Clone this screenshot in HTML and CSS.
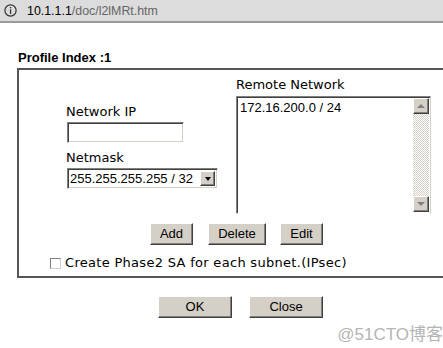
FILE: index.html
```html
<!DOCTYPE html>
<html>
<head>
<meta charset="utf-8">
<link rel="stylesheet" href="styles.css">
</head>
<body>
<div class="addressbar">
  <svg class="info" width="13" height="13" viewBox="0 0 13 13"><circle cx="6.5" cy="6.5" r="5.6" fill="none" stroke="#333" stroke-width="1.2"/><rect x="5.9" y="3" width="1.3" height="1.3" fill="#333"/><rect x="5.9" y="5.3" width="1.3" height="4.6" fill="#333"/></svg>
  <span class="host">10.1.1.1</span><span class="path">/doc/l2lMRt.htm</span>
</div>
<div class="page">
  <div class="title">Profile Index :1</div>
  <div class="group">
    <div class="cols">
      <div class="leftcol">
        <div class="label">Network IP</div>
        <div class="textbox"></div>
        <div class="label label-gap">Netmask</div>
        <div class="select">
          <span class="select-value">255.255.255.255 / 32</span>
          <span class="select-btn"><span class="tri-down"></span></span>
        </div>
      </div>
      <div class="rightcol">
        <div class="label">Remote Network</div>
        <div class="listbox">
          <div class="list-content">172.16.200.0 / 24</div>
          <div class="scrollbar">
            <span class="sb-btn"><span class="tri-up-grey"></span></span>
            <span class="sb-track"></span>
            <span class="sb-btn"><span class="tri-down-grey"></span></span>
          </div>
        </div>
      </div>
    </div>
    <div class="btnrow">
      <button class="btn btn-add">Add</button>
      <button class="btn btn-delete">Delete</button>
      <button class="btn btn-edit">Edit</button>
    </div>
    <div class="checkrow">
      <span class="checkbox"></span>
      <span class="checklabel">Create Phase2 SA for each subnet.(IPsec)</span>
    </div>
  </div>
  <div class="okrow">
    <button class="btn btn-big">OK</button>
    <button class="btn btn-big">Close</button>
  </div>
</div>
<div class="watermark">@51CTO博客</div>
</body>
</html>
```

FILE: styles.css
```css
html, body {
  margin: 0;
  padding: 0;
  background: #ffffff;
  overflow: hidden;
}
body {
  width: 443px;
  height: 348px;
  position: relative;
  font-family: "DejaVu Sans", Verdana, sans-serif;
  font-size: 13px;
  color: #000;
}
.addressbar {
  height: 21px;
  background: #dcdcdc;
  border-bottom: 2px solid #9a9a9a;
  display: flex;
  align-items: center;
  font-family: "Liberation Sans", Arial, sans-serif;
  font-size: 12.4px;
  box-sizing: content-box;
}
.info {
  margin-left: 4px;
  margin-right: 10px;
}
.host { color: #000; }
.path { color: #666; }
.page {
  padding-left: 17px;
}
.title {
  margin-top: 27px;
  margin-left: 1px;
  font-family: "Liberation Sans", Arial, sans-serif;
  font-weight: bold;
  font-size: 13px;
  line-height: 15px;
  height: 15px;
}
.group {
  margin-top: 3px;
  width: 424px;
  border-top: 2px solid #555;
  border-left: 2px solid #555;
  border-bottom: 2px solid #555;
  padding-top: 7px;
  padding-bottom: 6px;
}
.cols {
  display: flex;
  align-items: flex-start;
}
.label {
  line-height: 15px;
  height: 15px;
}
.leftcol {
  margin-left: 47px;
  width: 170px;
  margin-top: 27px;
}
.textbox {
  margin-top: 3px;
  margin-left: 1px;
  width: 117px;
  height: 21px;
  box-sizing: border-box;
  border-top: 1px solid #808080;
  border-left: 1px solid #808080;
  border-bottom: 1px solid #fff;
  border-right: 1px solid #fff;
  box-shadow: inset 1px 1px #404040, inset -1px -1px #d4d0c8;
  background: #fff;
}
.label-gap {
  margin-top: 7px;
}
.select {
  margin-top: 3px;
  margin-left: 1px;
  width: 151px;
  height: 21px;
  box-sizing: border-box;
  border-top: 1px solid #808080;
  border-left: 1px solid #808080;
  border-bottom: 1px solid #fff;
  border-right: 1px solid #fff;
  box-shadow: inset 1px 1px #404040, inset -1px -1px #d4d0c8;
  background: #fff;
  display: flex;
  align-items: center;
  padding: 2px 2px 2px 2px;
  font-family: "Liberation Sans", Arial, sans-serif;
  font-size: 13px;
}
.select-value {
  flex: 1;
  white-space: nowrap;
  line-height: 15px;
}
.select-btn {
  width: 15px;
  height: 15px;
  box-sizing: border-box;
  background: #d4d0c8;
  border-top: 1px solid #fff;
  border-left: 1px solid #fff;
  border-right: 1px solid #404040;
  border-bottom: 1px solid #404040;
  box-shadow: inset -1px -1px #808080;
  display: flex;
  align-items: center;
  justify-content: center;
}
.tri-down {
  width: 0;
  height: 0;
  border-left: 3.5px solid transparent;
  border-right: 3.5px solid transparent;
  border-top: 4px solid #000;
}
.rightcol {
  width: 196px;
}
.listbox {
  margin-top: 4px;
  width: 195px;
  height: 118px;
  box-sizing: border-box;
  border-top: 1px solid #808080;
  border-left: 1px solid #808080;
  border-bottom: 1px solid #fff;
  border-right: 1px solid #d4d0c8;
  box-shadow: inset 1px 1px #404040;
  background: #fff;
  display: flex;
  padding: 1px 1px 1px 1px;
}
.list-content {
  flex: 1;
  font-family: "Liberation Sans", Arial, sans-serif;
  font-size: 13px;
  line-height: 15px;
  padding: 2px 0 0 2px;
}
.scrollbar {
  width: 16px;
  display: flex;
  flex-direction: column;
}
.sb-btn {
  width: 16px;
  height: 16px;
  box-sizing: border-box;
  background: #d4d0c8;
  border-top: 1px solid #fff;
  border-left: 1px solid #fff;
  border-right: 1px solid #404040;
  border-bottom: 1px solid #404040;
  box-shadow: inset -1px -1px #808080;
  display: flex;
  align-items: center;
  justify-content: center;
}
.sb-track {
  flex: 1;
  background: repeating-conic-gradient(#d4d0c8 0 25%, #ffffff 0 50%) 0 0 / 2px 2px;
}
.tri-up-grey {
  width: 0;
  height: 0;
  border-left: 4px solid transparent;
  border-right: 4px solid transparent;
  border-bottom: 4px solid #808080;
}
.tri-down-grey {
  width: 0;
  height: 0;
  border-left: 4px solid transparent;
  border-right: 4px solid transparent;
  border-top: 4px solid #808080;
}
.btnrow {
  margin-top: 9px;
  padding-left: 131px;
  display: flex;
  gap: 14px;
}
.btn {
  font-family: "Liberation Sans", Arial, sans-serif;
  font-size: 13px;
  color: #000;
  background: #d4d0c8;
  height: 22px;
  box-sizing: border-box;
  border-top: 1px solid #fff;
  border-left: 1px solid #fff;
  border-right: 1px solid #404040;
  border-bottom: 1px solid #404040;
  box-shadow: inset -1px -1px #808080;
  padding: 0;
  margin: 0;
  line-height: 18px;
}
.btn-add { width: 43px; }
.btn-delete { width: 58px; margin-left: 1px; }
.btn-edit { width: 43px; }
.checkrow {
  margin-top: 10px;
  padding-left: 31px;
  display: flex;
  align-items: center;
  height: 15px;
  line-height: 15px;
}
.checkbox {
  width: 11px;
  height: 11px;
  box-sizing: border-box;
  border-top: 1px solid #808080;
  border-left: 1px solid #808080;
  border-bottom: 1px solid #d4d0c8;
  border-right: 1px solid #d4d0c8;
  background: #fff;
  margin-right: 4px;
  margin-top: 1px;
}
.checklabel {
  letter-spacing: 0.3px;
  white-space: nowrap;
}
.okrow {
  margin-top: 18px;
  padding-left: 141px;
  display: flex;
  gap: 17px;
}
.btn-big {
  width: 74px;
}
.watermark {
  position: absolute;
  right: 0;
  top: 320px;
  font-family: "Liberation Sans", "Noto Sans CJK SC", sans-serif;
  font-size: 17px;
  color: #b4b4b4;
  white-space: nowrap;
}
```
